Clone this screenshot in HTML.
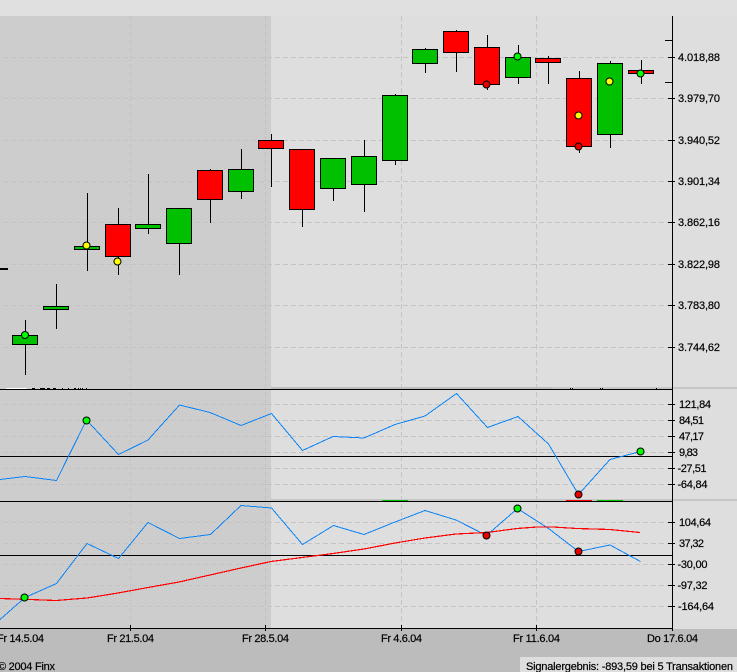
<!DOCTYPE html>
<html><head><meta charset="utf-8"><style>
html,body{margin:0;padding:0;background:#dedede}
svg{display:block;position:absolute;left:0;top:0}
text{font-family:"Liberation Sans",Arial,sans-serif;font-size:11px;fill:#000;stroke:#000;stroke-width:.2}
.g{stroke:#c4c4c4;stroke-width:1;stroke-dasharray:5 3;fill:none}
.k{stroke:#000;stroke-width:1;fill:none}
.gr{fill:#00c000;stroke:#000}
.re{fill:#f00;stroke:#000}
.c{stroke:#000;stroke-width:1}
</style></head><body>
<svg width="737" height="672" viewBox="0 0 737 672" xmlns="http://www.w3.org/2000/svg">
<defs><pattern id="p" width="4" height="4" patternUnits="userSpaceOnUse"><rect width="4" height="4" fill="#cecece"/><rect x="0" y="0" width="1" height="1" fill="#c6c6c6"/><rect x="2" y="2" width="1" height="1" fill="#c6c6c6"/></pattern></defs>
<rect width="737" height="672" fill="#dedede"/>
<rect width="737" height="16" fill="#e0e0e0"/>
<rect x="0" y="16" width="271" height="612" fill="url(#p)"/>
<rect x="0" y="629" width="737" height="43" fill="#bcbcbc"/>
<rect x="520" y="657" width="217" height="15" fill="#dedede"/>

<g shape-rendering="crispEdges">
<path class="g" d="M3 57.5H672M3 98.5H672M3 140.5H672M3 181.5H672M3 222.5H672M3 264.5H672M3 305.5H672M3 347.5H672"/>
<path class="g" d="M3 404.5H672M3 420.5H672M3 436.5H672M3 452.5H672M3 468.5H672M3 484.5H672"/>
<path class="g" d="M3 522.5H672M3 543.5H672M3 564.5H672M3 585.5H672M3 606.5H672"/>
<path class="g" d="M130.5 16V628M265.5 16V628M401.5 16V628M536.5 16V628"/>

<rect x="271" y="387" width="466" height="2" fill="#c6c6c6"/>
<rect x="271" y="387" width="281" height="2" fill="#bdbdbd"/>
<rect x="271" y="499" width="466" height="2" fill="#c6c6c6"/>
<rect x="6" y="388" width="21" height="1" fill="#fff"/>
<path d="M32 388h3M40 388h5M47 388h3M53 388h3M62 388h1M68 388h1M74 388h2M78 388h1M80 388h1M82 388h1M86 388h1M570 388h1M572 388h1M600 388h1M602 388h1M656 388h1" stroke="#000" transform="translate(0,.5)"/>
<rect x="382" y="500" width="26" height="1" fill="#00c000"/>
<rect x="566" y="500" width="26" height="1" fill="#f00"/>
<rect x="597" y="500" width="26" height="1" fill="#00c000"/>

<!-- wicks -->
<path class="k" d="M25.5 320V375M56.5 284V329M87.5 193V271M118.5 208V275M148.5 174V234M179.5 244V275M210.5 169V223M241.5 149V199M271.5 134V187M302.5 210V227M333.5 189V201M364.5 140V212M395.5 94V165M425.5 48V73M456.5 30V72M487.5 35V90M518.5 45V84M548.5 56V84M579.5 71V153M610.5 61V148M641.5 60V84"/>
<!-- candles -->
<rect class="gr" x="12.5" y="335.5" width="25" height="9"/>
<rect class="gr" x="43.5" y="306.5" width="25" height="3"/>
<rect class="gr" x="74.5" y="246.5" width="25" height="3"/>
<rect class="re" x="105.5" y="224.5" width="25" height="32"/>
<rect class="gr" x="135.5" y="224.5" width="25" height="4"/>
<rect class="gr" x="166.5" y="208.5" width="25" height="35"/>
<rect class="re" x="197.5" y="170.5" width="25" height="29"/>
<rect class="gr" x="228.5" y="169.5" width="25" height="22"/>
<rect class="re" x="258.5" y="140.5" width="25" height="8"/>
<rect class="re" x="289.5" y="149.5" width="25" height="60"/>
<rect class="gr" x="320.5" y="158.5" width="25" height="30"/>
<rect class="gr" x="351.5" y="156.5" width="25" height="28"/>
<rect class="gr" x="382.5" y="95.5" width="25" height="65"/>
<rect class="gr" x="412.5" y="49.5" width="25" height="14"/>
<rect class="re" x="443.5" y="31.5" width="25" height="21"/>
<rect class="re" x="474.5" y="47.5" width="25" height="37"/>
<rect class="gr" x="505.5" y="57.5" width="25" height="20"/>
<rect class="re" x="535.5" y="58.5" width="25" height="4"/>
<rect class="re" x="566.5" y="78.5" width="25" height="68"/>
<rect class="gr" x="597.5" y="63.5" width="25" height="71"/>
<rect class="re" x="628.5" y="70.5" width="25" height="3"/>

<rect x="0" y="268" width="8" height="2" fill="#000"/>

<!-- frame lines -->
<path class="k" d="M0 389.5H672M0 456.5H672M0 501.5H672M0 555.5H672M0 628.5H672M672.5 16V628"/>
<path class="k" d="M665 40.5H672M665 82.5H672M668 57.5H675M668 98.5H675M668 140.5H675M668 181.5H675M668 222.5H675M668 264.5H675M668 305.5H675M668 347.5H675"/>
<path class="k" d="M668 404.5H675M668 420.5H675M668 436.5H675M668 452.5H675M668 468.5H675M668 484.5H675M668 522.5H675M668 543.5H675M668 564.5H675M668 585.5H675M668 606.5H675"/>
<path class="k" d="M130.5 625V631M265.5 625V631M401.5 625V631M536.5 625V631M672.5 625V631"/>

<!-- indicator lines -->
<polyline fill="none" stroke="#0a84f5" points="0,479.5 25,476.5 56.5,480.5 86.5,420 118.5,454.5 148,440 179.5,405 210,412.5 241,425.5 271.5,413.5 302.5,450.5 333,436.5 364,438 395,424.5 425,416 456.5,393.5 487.5,427.5 518,416.5 548.5,444 578.5,494.5 610,459.5 640.5,451.5"/>
<polyline fill="none" stroke="#0a84f5" points="0,619.5 25,597.5 56.5,583.5 87,543.5 118.5,558.5 148,522.5 179.5,538.5 210.5,534.5 241,505.5 271.5,508 302.5,544.5 333.5,525.5 364,534.5 395,522 425,510.5 456,520 486.5,535.5 517.5,508.5 548.5,528.5 578.5,551.5 610,545 640.5,561.5"/>
<polyline fill="none" stroke="#f00" stroke-width="1.2" points="0,598.5 30,599.5 56,600.5 87,598 118,593 148,587.5 179,582 210,575 241,568 271,561.5 302,557.5 333,553.5 364,549 395,543 425,538 456,534 487,532.5 517,528.5 537,527 553,527 577,528.5 610,529.5 640,532.5"/>
</g>

<!-- signal dots -->
<g class="c">
<circle cx="25" cy="335" r="3.5" fill="#0f0"/>
<circle cx="86.5" cy="245.5" r="3.5" fill="#ff0"/>
<circle cx="117.5" cy="261.5" r="3.5" fill="#ff0"/>
<circle cx="486.5" cy="84.5" r="3.5" fill="#e80000"/>
<circle cx="517.5" cy="56.5" r="3.5" fill="#0f0"/>
<circle cx="578.5" cy="115.5" r="3.5" fill="#ff0"/>
<circle cx="578.5" cy="146.5" r="3.5" fill="#e80000"/>
<circle cx="609.5" cy="81.5" r="3.5" fill="#ff0"/>
<circle cx="640.5" cy="73.5" r="3.5" fill="#0f0"/>
<circle cx="86.5" cy="420.5" r="3.5" fill="#0f0"/>
<circle cx="578.5" cy="494.5" r="3.5" fill="#e80000"/>
<circle cx="640.5" cy="451.5" r="3.5" fill="#0f0"/>
<circle cx="24.5" cy="597.5" r="3.5" fill="#0f0"/>
<circle cx="486.5" cy="535.5" r="3.5" fill="#e80000"/>
<circle cx="517.5" cy="508.5" r="3.5" fill="#0f0"/>
<circle cx="578.5" cy="551.5" r="3.5" fill="#e80000"/>
</g>

<!-- labels -->
<g>
<text x="678" y="61" textLength="42">4.018,88</text>
<text x="678" y="102" textLength="42">3.979,70</text>
<text x="678" y="144" textLength="42">3.940,52</text>
<text x="678" y="185" textLength="42">3.901,34</text>
<text x="678" y="226" textLength="42">3.862,16</text>
<text x="678" y="268" textLength="42">3.822,98</text>
<text x="678" y="309" textLength="42">3.783,80</text>
<text x="678" y="351" textLength="42">3.744,62</text>
<text x="679" y="408" textLength="32">121,84</text>
<text x="679" y="424" textLength="25">84,51</text>
<text x="679" y="440" textLength="25">47,17</text>
<text x="679" y="456" textLength="19">9,83</text>
<text x="677.5" y="472" textLength="29">-27,51</text>
<text x="677.5" y="488" textLength="30">-64,84</text>
<text x="679" y="526" textLength="32">104,64</text>
<text x="679" y="547" textLength="25">37,32</text>
<text x="677.5" y="568" textLength="30">-30,00</text>
<text x="677.5" y="589" textLength="30">-97,32</text>
<text x="678" y="610" textLength="36">-164,64</text>
<text x="-3" y="642" textLength="47">Fr 14.5.04</text>
<text x="107" y="642" textLength="47">Fr 21.5.04</text>
<text x="242" y="642" textLength="47">Fr 28.5.04</text>
<text x="381" y="642" textLength="41">Fr 4.6.04</text>
<text x="513" y="642" textLength="47">Fr 11.6.04</text>
<text x="647" y="642" textLength="51">Do 17.6.04</text>
<text x="-2" y="670" textLength="57">© 2004 Finx</text>
<text x="526" y="670" textLength="207">Signalergebnis: -893,59 bei 5 Transaktionen</text>
</g>
</svg>
</body></html>
